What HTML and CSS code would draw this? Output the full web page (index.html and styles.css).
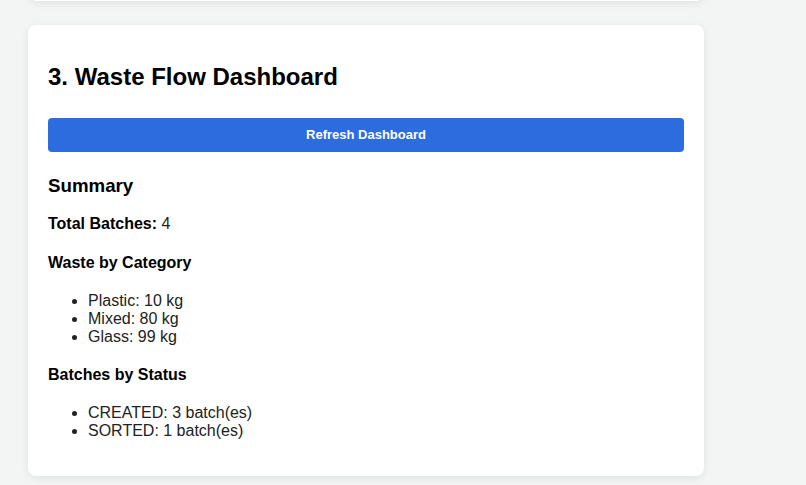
FILE: index.html
```html
<!DOCTYPE html>
<html lang="en">
<head>
  <meta charset="UTF-8">
  <title>Waste Flow Dashboard</title>
  <link rel="stylesheet" href="styles.css">
</head>
<body>
  <div class="page">
    <!-- previous section, scrolled mostly out of view -->
    <section class="card card-prev"></section>

    <section class="card">
      <h2>3. Waste Flow Dashboard</h2>
      <button type="button" id="refreshBtn">Refresh Dashboard</button>

      <div id="dashboard">
        <h3>Summary</h3>
        <p class="total"><strong>Total Batches:</strong> 4</p>

        <h4>Waste by Category</h4>
        <ul>
          <li>Plastic: 10 kg</li>
          <li>Mixed: 80 kg</li>
          <li>Glass: 99 kg</li>
        </ul>

        <h4>Batches by Status</h4>
        <ul>
          <li>CREATED: 3 batch(es)</li>
          <li>SORTED: 1 batch(es)</li>
        </ul>
      </div>
    </section>
  </div>
</body>
</html>
```

FILE: styles.css
```css
body {
  font-family: "Liberation Sans", Arial, sans-serif;
  background-color: #f3f4f4;
  color: #222;
  margin: 0;
  padding: 0 28px;
  overflow: hidden;
}
.page {
  max-width: 676px;
}
.card {
  background: #fff;
  padding: 20px;
  border-radius: 8px;
  box-shadow: 0 2px 8px rgba(0,0,0,0.08);
  margin-bottom: 24px;
}
/* bottom edge of the section above */
.card-prev {
  height: 0;
  margin-top: -39px;
}
h2 {
  font-size: 24px;
  color: #000;
  margin: 18px 0 27px;
}
h3 {
  font-size: 18.72px;
  color: #000;
  margin: 23px 0 18px;
}
h4 {
  font-size: 16px;
  color: #000;
  margin: 20px 0;
}
p {
  margin: 16px 0;
}
p.total {
  margin-bottom: 21px;
}
p strong {
  color: #000;
}
ul {
  margin: 16px 0;
  padding-left: 40px;
}
li {
  line-height: 18px;
}
button {
  display: block;
  width: 100%;
  padding: 10px;
  background-color: #2d6cdf;
  color: #fff;
  border: none;
  border-radius: 4px;
  font-family: inherit;
  font-size: 13px;
  line-height: 14px;
  font-weight: bold;
  cursor: pointer;
}
button:hover {
  background-color: #2358bd;
}
```
